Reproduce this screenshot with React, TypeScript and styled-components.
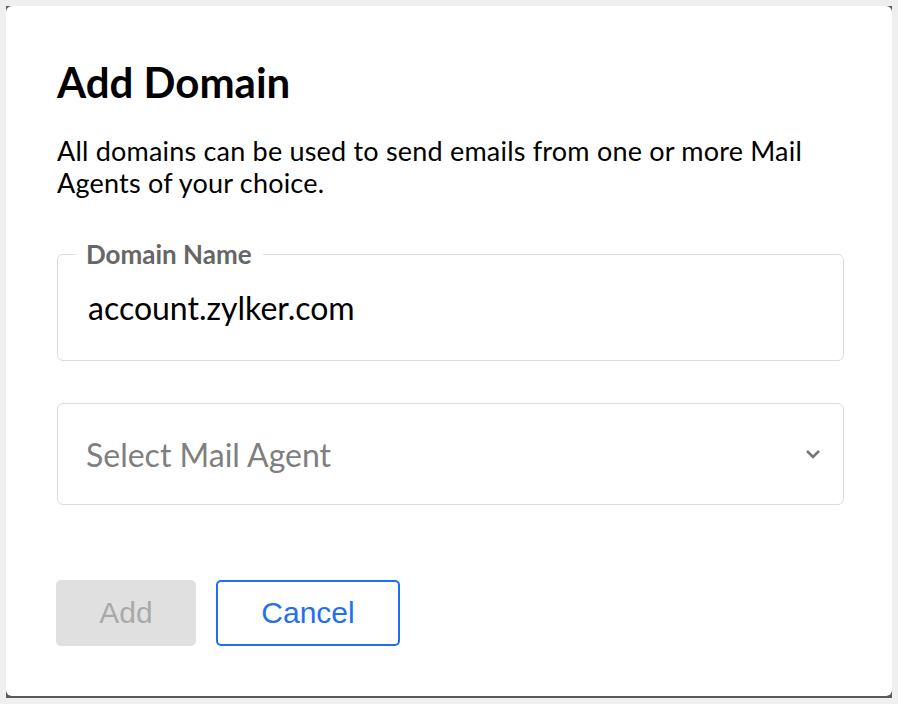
import React from 'react'
import styled, { createGlobalStyle } from 'styled-components'

const GlobalStyle = createGlobalStyle`
  html, body {
    margin: 0;
    padding: 0;
    background: #efefef;
  }
  * {
    box-sizing: border-box;
  }
`

const Page = styled.div`
  padding: 6px 6px 6px 6px;
  width: 898px;
  height: 704px;
`

// dark backing only shows through at the rounded corners and along the bottom
const Frame = styled.div`
  background: #5a5a5a;
  padding-bottom: 2px;
`

const Card = styled.section`
  background: #fff;
  height: 690px;
  border-radius: 6px;
  padding: 52px 48px 0 51px;
  font-family: Lato, 'Open Sans', sans-serif;
  color: #000;
`

const Title = styled.h1`
  margin: 0;
  font-size: 42px;
  line-height: 48px;
  font-weight: 700;
`

const Lead = styled.p`
  margin: 29px 0 0;
  font-size: 27px;
  letter-spacing: 0.2px;
  line-height: 32px;
`

const FieldBox = styled.fieldset`
  margin: 43px 0 0;
  padding: 0 30px;
  border: 1px solid #dcdcdc;
  border-radius: 6px;
  height: 119px;
`

const Legend = styled.legend`
  margin-left: -13px;
  padding: 0 11px;
  font-size: 26px;
  line-height: 24px;
  font-weight: 700;
  color: #666;
`

const Value = styled.div`
  font-size: 32px;
  line-height: 38px;
  margin-top: 23px;
`

const Select = styled.div`
  margin-top: 42px;
  height: 102px;
  border: 1px solid #dcdcdc;
  border-radius: 6px;
  display: flex;
  align-items: center;
  justify-content: space-between;
  padding: 0 22px 0 28px;
`

const Placeholder = styled.span`
  font-size: 32px;
  color: #7f7f7f;
`

const Actions = styled.div`
  margin: 75px 0 0 -1px;
  display: flex;
  gap: 20px;
`

const Button = styled.button<{ $variant: 'primary' | 'outline' }>`
  height: 66px;
  font-family: 'Liberation Sans', Arial, sans-serif;
  font-size: 30px;
  border-radius: 5px;
  padding: 0;
  cursor: pointer;
  width: ${(p) => (p.$variant === 'primary' ? '140px' : '184px')};
  background: ${(p) => (p.$variant === 'primary' ? '#e0e0e0' : '#fff')};
  color: ${(p) => (p.$variant === 'primary' ? '#a9a9a9' : '#1f6ff2')};
  border: ${(p) => (p.$variant === 'primary' ? 'none' : '2px solid #1f6ff2')};
`

const Chevron = () => (
  <svg width='16' height='10' viewBox='0 0 16 10'>
    <path d='M2 2 L8 8 L14 2' fill='none' stroke='#767676' strokeWidth='2.6' />
  </svg>
)

const App: React.FC = () => {
  return (
    <Page>
      <GlobalStyle />
      <Frame>
        <Card>
          <Title>Add Domain</Title>
          <Lead>All domains can be used to send emails from one or more Mail Agents of your choice.</Lead>
          <FieldBox>
            <Legend>Domain Name</Legend>
            <Value>account.zylker.com</Value>
          </FieldBox>
          <Select>
            <Placeholder>Select Mail Agent</Placeholder>
            <Chevron />
          </Select>
          <Actions>
            <Button $variant='primary' disabled>
              Add
            </Button>
            <Button $variant='outline'>Cancel</Button>
          </Actions>
        </Card>
      </Frame>
    </Page>
  )
}

export default App
